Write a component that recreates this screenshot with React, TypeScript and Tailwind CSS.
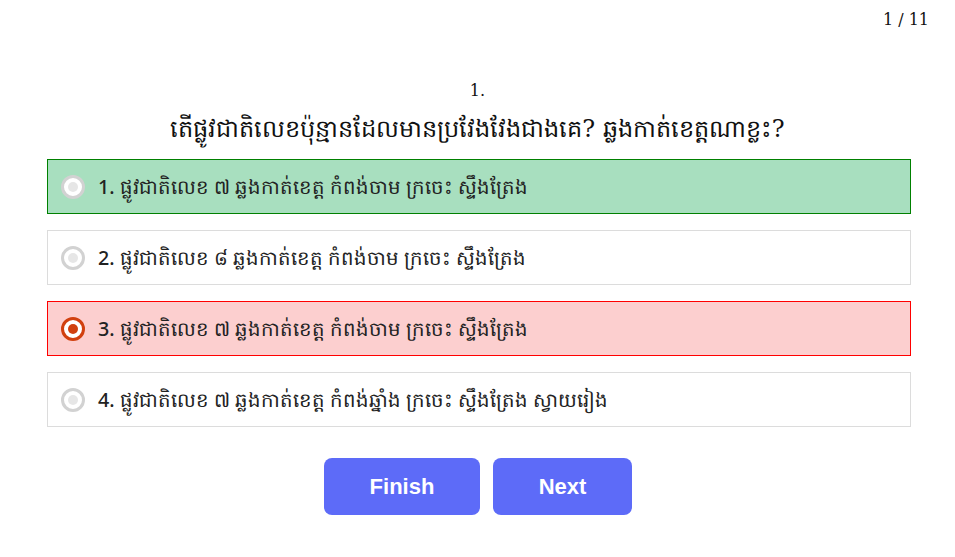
const options = [
  { id: 1, text: '1. ផ្លូវជាតិលេខ ៧ ឆ្លងកាត់ខេត្ត កំពង់ចាម ក្រចេះ ស្ទឹងត្រែង', state: 'correct' },
  { id: 2, text: '2. ផ្លូវជាតិលេខ ៨ ឆ្លងកាត់ខេត្ត កំពង់ចាម ក្រចេះ ស្ទឹងត្រែង', state: 'none' },
  { id: 3, text: '3. ផ្លូវជាតិលេខ ៧ ឆ្លងកាត់ខេត្ត កំពង់ចាម ក្រចេះ ស្ទឹងត្រែង', state: 'wrong' },
  { id: 4, text: '4. ផ្លូវជាតិលេខ ៧ ឆ្លងកាត់ខេត្ត កំពង់ឆ្នាំង ក្រចេះ ស្ទឹងត្រែង ស្វាយរៀង', state: 'none' },
];

function Radio({ checked }: { checked: boolean }) {
  if (checked) {
    return (
      <span className="flex h-[24px] w-[24px] items-center justify-center rounded-full border-[3px] border-[#d1400f] bg-white">
        <span className="h-[10px] w-[10px] rounded-full bg-[#d1400f]" />
      </span>
    );
  }
  return (
    <span className="flex h-[24px] w-[24px] items-center justify-center rounded-full border-[3px] border-[#d2d2d2] bg-white">
      <span className="h-[10px] w-[10px] rounded-full bg-[#e6e6e6]" />
    </span>
  );
}

export default function App() {
  return (
    <div className="relative min-h-[557px] w-full bg-white">
      <div className="flex justify-end px-[26px] pt-[8px] font-['DejaVu_Serif',serif] text-[16px] text-[#111]">
        1 / 11
      </div>

      <div className="mt-[49px] text-center font-['DejaVu_Serif',serif] text-[#111]">
        <div className="text-[16px] leading-[20px]">1.</div>
        <div className="mt-[10px] text-[24px] leading-[36px]">
          តើផ្លូវជាតិលេខប៉ុន្មានដែលមានប្រវែងវែងជាងគេ? ឆ្លងកាត់ខេត្តណាខ្លះ?
        </div>
      </div>

      <div className="ml-[47px] mt-[12px] flex w-[864px] flex-col gap-[16px]">
        {options.map((o) => (
          <div
            key={o.id}
            className={
              'flex h-[55px] items-center gap-[13px] border px-[13px] font-["Noto_Sans",sans-serif] text-[19.7px] font-medium text-[#222] ' +
              (o.state === 'correct'
                ? 'border-[#008000] bg-[#a8dfbf]'
                : o.state === 'wrong'
                ? 'border-[#ff0000] bg-[#fccfcf]'
                : 'border-[#dcdcdc] bg-white')
            }
          >
            <Radio checked={o.state === 'wrong'} />
            <span>{o.text}</span>
          </div>
        ))}
      </div>

      <div className="mt-[31px] flex justify-center gap-[13px] pl-[1px]">
        <button className="h-[57px] w-[156px] rounded-[8px] bg-[#5d6bf8] font-['Liberation_Sans',sans-serif] text-[22px] font-bold text-white">
          Finish
        </button>
        <button className="h-[57px] w-[139px] rounded-[8px] bg-[#5d6bf8] font-['Liberation_Sans',sans-serif] text-[22px] font-bold text-white">
          Next
        </button>
      </div>
    </div>
  );
}
